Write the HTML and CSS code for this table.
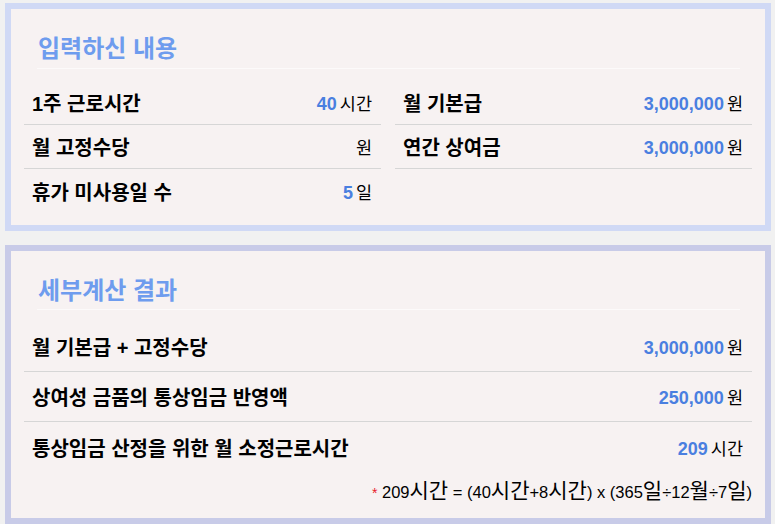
FILE: index.html
```html
<!DOCTYPE html>
<html lang="ko">
<head>
<meta charset="utf-8">
<title>통상임금 계산 결과</title>
<link rel="stylesheet" href="styles.css">
</head>
<body>
<div class="page">
  <section class="box box-input">
    <h2 class="box-title">입력하신 내용</h2>
    <div class="cols">
      <ul class="list">
        <li class="row"><span class="label">1주 근로시간</span><span class="value"><b class="num">40</b><span class="unit">시간</span></span></li>
        <li class="row"><span class="label">월 고정수당</span><span class="value"><b class="num"></b><span class="unit">원</span></span></li>
        <li class="row last"><span class="label">휴가 미사용일 수</span><span class="value"><b class="num">5</b><span class="unit">일</span></span></li>
      </ul>
      <ul class="list">
        <li class="row"><span class="label">월 기본급</span><span class="value"><b class="num">3,000,000</b><span class="unit">원</span></span></li>
        <li class="row"><span class="label">연간 상여금</span><span class="value"><b class="num">3,000,000</b><span class="unit">원</span></span></li>
      </ul>
    </div>
  </section>
  <section class="box box-result">
    <h2 class="box-title">세부계산 결과</h2>
    <ul class="list">
      <li class="row tall"><span class="label">월 기본급 + 고정수당</span><span class="value"><b class="num">3,000,000</b><span class="unit">원</span></span></li>
      <li class="row tall"><span class="label">상여성 금품의 통상임금 반영액</span><span class="value"><b class="num">250,000</b><span class="unit">원</span></span></li>
      <li class="row tall last"><span class="label">통상임금 산정을 위한 월 소정근로시간</span><span class="value"><b class="num">209</b><span class="unit">시간</span></span></li>
    </ul>
    <p class="note"><span class="star">*</span> 209<span class="ko">시간</span> = (40<span class="ko">시간</span>+8<span class="ko">시간</span>) x (365<span class="ko">일</span>÷12<span class="ko">월</span>÷7<span class="ko">일</span>)</p>
  </section>
</div>
</body>
</html>
```

FILE: styles.css
```css
* { box-sizing: border-box; }
html, body {
  margin: 0;
  padding: 0;
  background: #f1f1f1;
}
body {
  font-family: "Liberation Sans", "Noto Sans CJK KR", sans-serif;
  color: #000;
}
.page {
  padding: 3px 4px 0 5px;
  display: flex;
  flex-direction: column;
  gap: 14px;
}
.box {
  background: #f7f2f2;
  border: 6px solid #d0d9f5;
  padding: 0 13px 12px;
}
.box-result {
  border-color: #c8cbe8;
  padding-bottom: 15px;
}
.box-title {
  margin: 0 12px 12px 13px;
  padding: 25px 0 5px 1px;
  font-size: 24px;
  line-height: 29px;
  font-weight: 700;
  color: #6e9cee;
  border-bottom: 1px solid #fcfafa;
}
.box-result .box-title {
  padding-bottom: 4px;
}
.cols {
  display: grid;
  grid-template-columns: 1fr 1fr;
  column-gap: 14px;
}
.list {
  list-style: none;
  margin: 0;
  padding: 0;
}
.row {
  display: flex;
  align-items: center;
  justify-content: space-between;
  height: 44px;
  padding: 0 9px 0 8px;
  border-bottom: 1px solid #d6d6d6;
}
.row.tall { height: 50px; }
.row.last { border-bottom: none; }
.label {
  font-size: 20px;
  font-weight: 700;
}
.value {
  display: flex;
  align-items: baseline;
  gap: 3px;
}
.num {
  font-size: 18px;
  font-weight: 700;
  color: #4a7fe0;
}
.unit {
  font-size: 17.5px;
  font-weight: 400;
}
.note {
  margin: 10px 0 0;
  text-align: right;
  font-size: 16.5px;
  line-height: 20px;
}
.note .ko {
  font-size: 21px;
  line-height: 16px;
}
.star {
  color: #e8202a;
  font-size: 14px;
}
```
